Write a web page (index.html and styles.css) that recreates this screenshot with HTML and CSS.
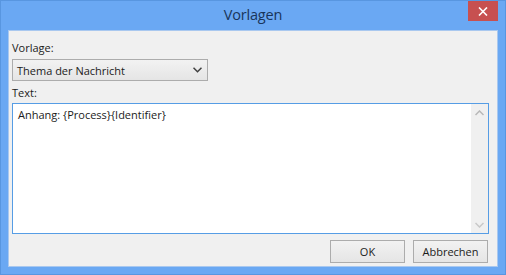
FILE: index.html
```html
<!DOCTYPE html>
<html lang="de">
<head>
  <meta charset="utf-8">
  <title>Vorlagen</title>
  <link rel="stylesheet" href="styles.css">
</head>
<body>
  <div class="window">
    <div class="titlebar">
      <span class="title">Vorlagen</span>
      <button class="close_btn" type="button">
        <svg width="10" height="9" viewBox="0 0 10 9"><path d="M1 0.5 L9 8.5 M9 0.5 L1 8.5" stroke="#fff" stroke-width="1.6"/></svg>
      </button>
    </div>
    <div class="client">
      <label class="field_label">Vorlage:</label>
      <div class="select">
        <span>Thema der Nachricht</span>
        <svg width="9" height="6" viewBox="0 0 9 6"><path d="M0.5 0.8 L4.5 4.8 L8.5 0.8" stroke="#404040" stroke-width="1.5" fill="none"/></svg>
      </div>
      <label class="field_label label_text">Text:</label>
      <div class="textarea">
        <div class="text_content">Anhang: {Process}{Identifier}</div>
        <div class="scrollbar">
          <svg width="9" height="6" viewBox="0 0 9 6"><path d="M0.5 5 L4.5 1 L8.5 5" stroke="#b8b8b8" stroke-width="1.5" fill="none"/></svg>
          <svg width="9" height="6" viewBox="0 0 9 6"><path d="M0.5 1 L4.5 5 L8.5 1" stroke="#c8c8c8" stroke-width="1.5" fill="none"/></svg>
        </div>
      </div>
      <div class="buttons">
        <button class="btn" type="button">OK</button>
        <button class="btn" type="button">Abbrechen</button>
      </div>
    </div>
  </div>
</body>
</html>
```

FILE: styles.css
```css
html, body {
  margin: 0;
  padding: 0;
}

body {
  font-family: "Open Sans", "Noto Sans", sans-serif;
  font-size: 11px;
  color: #1b1b1b;
  background-color: #ffffff;
}

.window {
  width: 506px;
  height: 275px;
  box-sizing: border-box;
  border: 1px solid #5896e0;
  background-color: #6aa8f3;
  display: flex;
  flex-direction: column;
  padding: 0 7px 7px 7px;
}

.titlebar {
  height: 29px;
  display: flex;
  justify-content: center;
  align-items: flex-start;
  position: relative;
}

.title {
  font-size: 14.5px;
  color: #19355a;
  margin-top: 4px;
  letter-spacing: -0.2px;
}

.close_btn {
  position: absolute;
  right: 0;
  top: 0;
  width: 30px;
  height: 20px;
  border: none;
  padding: 0;
  background-color: #c75050;
  display: flex;
  align-items: center;
  justify-content: center;
}

.client {
  flex: 1;
  background-color: #f0f0f0;
  border: 1px solid #a9c8ef;
  display: flex;
  flex-direction: column;
  padding: 0 8px 0 3px;
}

.field_label {
  height: 17px;
  margin-top: 8px;
  line-height: 17px;
  color: #1b1b1b;
}

.label_text {
  margin-top: 3px;
}

.select {
  width: 196px;
  height: 22px;
  box-sizing: border-box;
  margin-top: 3px;
  border: 1px solid #acacac;
  background: linear-gradient(#f2f2f2, #e5e5e5);
  display: flex;
  align-items: center;
  justify-content: space-between;
  padding: 0 5px 0 4px;
}

.textarea {
  height: 131px;
  box-sizing: border-box;
  margin-top: 2px;
  border: 1px solid #569de5;
  background-color: #ffffff;
  display: flex;
}

.text_content {
  flex: 1;
  padding: 3px 0 0 5px;
}

.scrollbar {
  width: 17px;
  background-color: #f0f0f0;
  display: flex;
  flex-direction: column;
  align-items: center;
  justify-content: space-between;
  padding: 6px 0 5px 0;
}

.buttons {
  display: flex;
  justify-content: flex-end;
  gap: 8px;
  margin-top: 6px;
  padding-right: 1px;
}

.btn {
  width: 75px;
  height: 23px;
  border: 1px solid #acacac;
  background: linear-gradient(#f2f2f2, #e5e5e5);
  font-family: "Open Sans", "Noto Sans", sans-serif;
  font-size: 11px;
  color: #1b1b1b;
  padding: 0;
}
```
